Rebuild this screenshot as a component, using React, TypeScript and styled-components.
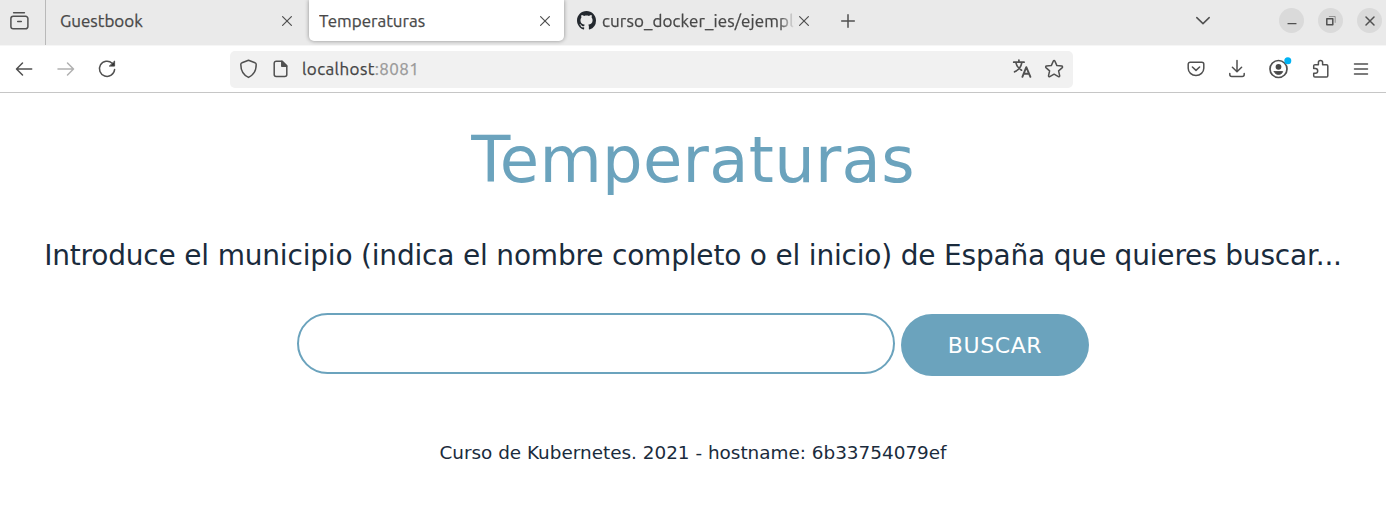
import React from "react";
import styled, { createGlobalStyle } from "styled-components";

const GlobalStyle = createGlobalStyle`
  * { box-sizing: border-box; }
  html, body { margin: 0; padding: 0; background: #fff; }
  body { font-family: "DejaVu Sans", Verdana, sans-serif; color: #1a2b3c; overflow: hidden; }
`;

const Window = styled.div`
  width: 1386px;
  height: 520px;
  display: flex;
  flex-direction: column;
  background: #fff;
`;

const TabStrip = styled.div`
  height: 45px;
  flex: none;
  display: flex;
  align-items: flex-start;
  background: #eaeaea;
  font-family: Ubuntu, "Noto Sans", sans-serif;
`;

const ViewButton = styled.div`
  width: 46px;
  height: 45px;
  padding: 11px 0 0 9px;
  border-right: 1px solid #b9b9b9;
`;

const Tab = styled.div<{ $width: number; $active?: boolean; $left: number; $right: number }>`
  width: ${(p) => p.$width}px;
  height: 41px;
  padding: 0 ${(p) => p.$right}px 0 ${(p) => p.$left}px;
  display: flex;
  align-items: center;
  border-radius: 0 0 5px 5px;
  background: ${(p) => (p.$active ? "#fff" : "transparent")};
  box-shadow: ${(p) => (p.$active ? "0 0 4px rgba(0, 0, 0, 0.4)" : "none")};
  clip-path: ${(p) => (p.$active ? "inset(0 -6px -6px -6px)" : "none")};
`;

const TabTitle = styled.span<{ $fade?: boolean }>`
  flex: 1;
  min-width: 0;
  overflow: hidden;
  white-space: nowrap;
  font-size: 17px;
  line-height: 24px;
  color: #484848;
  -webkit-text-stroke: 0.25px currentColor;
  padding-top: 1px;
  ${(p) => p.$fade && "letter-spacing: 0.12px; mask-image: linear-gradient(to right, #000 90%, transparent 98%);"}
`;

const Icon = styled.svg`
  display: block;
  flex: none;
  overflow: visible;
  fill: none;
  stroke: #505050;
  stroke-width: 1.5;
  stroke-linecap: round;
  stroke-linejoin: round;
`;

const GithubIcon = styled(Icon)`
  margin-right: 6px;
  fill: #24292f;
  stroke: none;
`;

const NewTab = styled.div`
  padding: 14px 0 0 31px;
`;

const WindowControls = styled.div`
  margin-left: auto;
  height: 41px;
  display: flex;
  align-items: center;
  padding-right: 4px;
`;

const ControlButton = styled.div`
  width: 25px;
  height: 25px;
  margin-left: 14px;
  border-radius: 50%;
  background: #dadada;
  display: flex;
  align-items: center;
  justify-content: center;
`;

const Dropdown = styled.div`
  margin-right: 55px;
`;

const NavBar = styled.div`
  height: 48px;
  flex: none;
  display: flex;
  align-items: center;
  border-bottom: 1px solid #c6c6c6;
  border-top: 1px solid #f6f6f6;
  padding: 0 16px 0 15px;
`;

const NavButtons = styled.div`
  width: 215px;
  display: flex;
  gap: 23.5px;
`;

const UrlBar = styled.div`
  width: 843px;
  height: 37px;
  border-radius: 5px;
  background: #f1f1f1;
  display: flex;
  align-items: center;
  padding: 0 9px;
`;

const UrlText = styled.span`
  flex: 1;
  margin-left: 12px;
  font: 17px/24px Ubuntu, "Noto Sans", sans-serif;
  letter-spacing: 0.4px;
  color: #444;
  -webkit-text-stroke: 0.25px currentColor;
`;

const Port = styled.span`
  color: #999;
  -webkit-text-stroke: 0.25px currentColor;
`;

const UrlIcons = styled.div`
  display: flex;
  gap: 13px;
`;

const Toolbar = styled.div`
  margin-left: auto;
  display: flex;
  gap: 22.5px;
`;

const Page = styled.main`
  display: flex;
  flex-direction: column;
  align-items: center;
  padding-top: 29px;
`;

const Title = styled.h1`
  margin: 0;
  font-size: 64px;
  font-weight: 400;
  line-height: 76px;
  letter-spacing: 0.3px;
  color: #6ba3bd;
`;

const Prompt = styled.p`
  margin: 41px 0 0;
  font-size: 28px;
  line-height: 34px;
  letter-spacing: -0.19px;
  white-space: nowrap;
`;

const SearchForm = styled.form`
  margin: 40px 0 0;
  display: flex;
  gap: 6px;
`;

const SearchInput = styled.input`
  width: 598px;
  height: 61px;
  padding: 0 28px;
  border: 2px solid #6ba3bd;
  border-radius: 31px;
  background: #fff;
  outline: none;
  font: 22px "DejaVu Sans", sans-serif;
`;

const SearchButton = styled.button`
  width: 188px;
  height: 62px;
  margin-top: 1px;
  padding: 0;
  border: 0;
  border-radius: 31px;
  background: #6ba3bd;
  color: #fff;
  font: 22px "DejaVu Sans", sans-serif;
  letter-spacing: 0.6px;
`;

const Footer = styled.footer`
  margin-top: 66px;
  font-size: 18.4px;
  line-height: 22px;
  white-space: nowrap;
`;

const CloseIcon = () => (
  <Icon width="10" height="10" viewBox="0 0 10 10">
    <path d="M.6.6l8.800 8.800M9.400.6L.6 9.400" strokeWidth="1.2" />
  </Icon>
);

export default function App() {
  return (
    <Window>
      <GlobalStyle />
      <TabStrip>
        <ViewButton>
          <Icon width="20" height="20" viewBox="0 0 20 20">
            <path d="M4.600 1.700h10.800M4.200 5.300h12.400a2.300 2.300 0 0 1 2.300 2.300v7.900a2.300 2.300 0 0 1-2.300 2.300H4.200a2.300 2.300 0 0 1-2.300-2.300v-7.900A2.300 2.300 0 0 1 4.200 5.300zM8.700 10.500h3.600" />
          </Icon>
        </ViewButton>
        <Tab $width={263} $left={14} $right={17}>
          <TabTitle>Guestbook</TabTitle>
          <CloseIcon />
        </Tab>
        <Tab $width={255} $left={10} $right={14} $active>
          <TabTitle>Temperaturas</TabTitle>
          <CloseIcon />
        </Tab>
        <Tab $width={246} $left={13} $right={1}>
          <GithubIcon width="19" height="19" viewBox="0 0 16 16">
            <path d="M8 0C3.580 0 0 3.580 0 8c0 3.540 2.290 6.530 5.470 7.590.4.070.55-.17.55-.38 0-.19-.01-.82-.01-1.490-2.010.37-2.530-.49-2.690-.94-.09-.23-.48-.94-.82-1.130-.28-.15-.68-.52-.01-.53.63-.01 1.080.58 1.230.82.72 1.210 1.870.87 2.330.66.07-.52.28-.87.51-1.070-1.780-.2-3.640-.89-3.640-3.950 0-.87.31-1.590.82-2.150-.08-.2-.36-1.020.08-2.120 0 0 .67-.21 2.200.82.64-.18 1.320-.27 2-.27s1.360.09 2 .27c1.530-1.040 2.200-.82 2.200-.82.44 1.100.16 1.920.08 2.120.51.56.82 1.270.82 2.150 0 3.070-1.870 3.750-3.650 3.950.29.25.54.73.54 1.480 0 1.070-.01 1.930-.01 2.200 0 .21.15.46.55.38A8.010 8.010 0 0 0 16 8c0-4.420-3.580-8-8-8z" />
          </GithubIcon>
          <TabTitle $fade>curso_docker_ies/ejemplo</TabTitle>
          <CloseIcon />
        </Tab>
        <NewTab>
          <Icon width="14" height="14" viewBox="0 0 14 14"><path d="M7 .7v12.600M.7 7h12.600" /></Icon>
        </NewTab>
        <WindowControls>
          <Dropdown>
            <Icon width="14" height="8" viewBox="0 0 14 8"><path d="M.8.600L7 6.600 13.200.6" /></Icon>
          </Dropdown>
          <ControlButton>
            <Icon width="10" height="10" viewBox="0 0 10 10"><path d="M1 7.700h8" strokeWidth="1.200" /></Icon>
          </ControlButton>
          <ControlButton>
            <Icon width="10" height="10" viewBox="0 0 10 10">
              <path d="M.8 2.700h6v6h-6z" />
              <path d="M3.300.5h5.900v5.900" opacity=".5" strokeWidth="1" />
            </Icon>
          </ControlButton>
          <ControlButton>
            <Icon width="10" height="10" viewBox="0 0 10 10"><path d="M1 1l8 8M9 1L1 9" /></Icon>
          </ControlButton>
        </WindowControls>
      </TabStrip>
      <NavBar>
        <NavButtons>
          <Icon width="18" height="18" viewBox="0 0 18 18"><path d="M16.700 9H1.800M7.500 3L1.500 9l6 6" /></Icon>
          <Icon width="18" height="18" viewBox="0 0 18 18" opacity=".45"><path d="M1 9h15.200M10.500 3l6 6-6 6" /></Icon>
          <Icon width="18" height="18" viewBox="0 0 18 18">
            <path d="M14.200 3.200A7.600 7.600 0 1 0 16.600 9.500" />
            <path d="M16.600 1.400v4.700h-4.900z" fill="#333" strokeWidth="1" />
          </Icon>
        </NavButtons>
        <UrlBar>
          <UrlIcons>
            <Icon width="19" height="20" viewBox="0 0 19 20">
              <path d="M9.500 1.200L16 3.700a1.800 1.800 0 0 1 1.200 1.700C17.200 11 14.800 15.800 9.500 18.400 4.200 15.800 1.800 11 1.800 5.400A1.800 1.800 0 0 1 3 3.700z" />
            </Icon>
            <Icon width="19" height="20" viewBox="0 0 19 20">
              <path d="M5.200 2.200h6l4.600 4.600v8.800a2 2 0 0 1-2 2H5.200a2 2 0 0 1-2-2V4.200a2 2 0 0 1 2-2z" />
              <path d="M10.800 2.400v4.800h4.800z" fill="#505050" />
            </Icon>
          </UrlIcons>
          <UrlText>localhost<Port>:8081</Port></UrlText>
          <UrlIcons>
            <Icon width="20" height="20" viewBox="0 0 20 20">
              <path d="M1.700 3.200h10.400M6.900 1v2M3.900 3.600c.6 3 3.400 6.200 5.600 7.600M9.800 3.600c-.7 4-3.300 7.400-7.200 9.200" strokeWidth="1.700" />
              <path d="M10.400 17.800l3.900-9.600 4.100 9.600M11.600 14.700h5.500" strokeWidth="1.900" />
            </Icon>
            <Icon width="19" height="20" viewBox="0 0 19 20">
              <path d="M8.300 2.100a.9.9 0 0 1 1.600 0l2 4.500 4.900.5a.9.9 0 0 1 .5 1.500L13.600 11.900l1.100 4.900a.9.9 0 0 1-1.300.9l-4.300-2.500-4.300 2.500a.9.9 0 0 1-1.300-.9L4.600 11.900.9 8.600a.9.9 0 0 1 .5-1.500l4.900-.5z" />
            </Icon>
          </UrlIcons>
        </UrlBar>
        <Toolbar>
          <Icon width="18" height="20" viewBox="0 0 18 20">
            <path d="M3.200 3.200h11.600a2 2 0 0 1 2 2v4a7.800 7.300 0 0 1-15.600 0v-4a2 2 0 0 1 2-2zM5.400 8l3.600 3.400L12.600 8" />
          </Icon>
          <Icon width="18" height="20" viewBox="0 0 18 20">
            <path d="M9 1.500v11M4.400 8.200L9 12.800l4.600-4.600M1.800 14.500v1a2 2 0 0 0 2 2h10.400a2 2 0 0 0 2-2v-1" />
          </Icon>
          <Icon width="20" height="20" viewBox="-.5 0 20 20">
            <circle cx="10" cy="10" r="8.500" strokeWidth="1.700" />
            <circle cx="10" cy="7.800" r="2.900" fill="#484848" stroke="none" />
            <path d="M5.800 12.600h8.400c-.8 2-2.400 2.800-4.200 2.800s-3.400-.8-4.200-2.800z" fill="#484848" strokeWidth="1" />
            <circle cx="19.300" cy="1.800" r="3.500" fill="#00b3f4" stroke="none" />
          </Icon>
          <Icon width="19" height="20" viewBox="0 0 19 20">
            <path d="M2.700 8.800V7a1.300 1.300 0 0 1 1.300-1.300h3.400V3.600a2.100 2.100 0 0 1 4.200 0v2.100h3.900A1.300 1.300 0 0 1 16.800 7v9.700a1.300 1.300 0 0 1-1.300 1.300H4a1.300 1.300 0 0 1-1.300-1.300v-2.500h1.700a2.300 2.300 0 0 0 0-4.600H2.700z" />
          </Icon>
          <Icon width="18" height="20" viewBox="0 0 18 20"><path d="M2.500 5h13M2.500 10h13M2.500 15h13" /></Icon>
        </Toolbar>
      </NavBar>
      <Page>
        <Title>Temperaturas</Title>
        <Prompt>Introduce el municipio (indica el nombre completo o el inicio) de España que quieres buscar...</Prompt>
        <SearchForm onSubmit={(e) => e.preventDefault()}>
          <SearchInput type="text" aria-label="Municipio" />
          <SearchButton type="submit">BUSCAR</SearchButton>
        </SearchForm>
        <Footer>Curso de Kubernetes. 2021 - hostname: 6b33754079ef</Footer>
      </Page>
    </Window>
  );
}
